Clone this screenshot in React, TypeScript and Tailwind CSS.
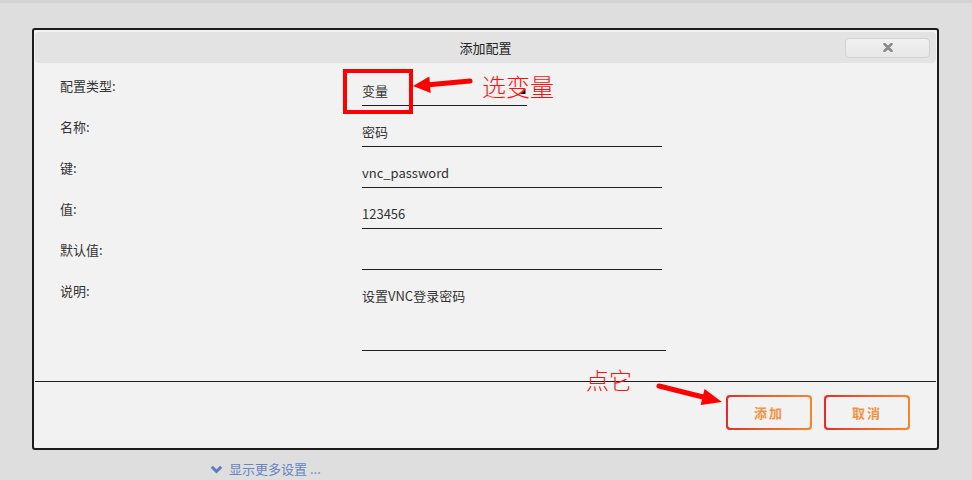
import React from "react";

const rows: { label: string; value: string; width: string; tall?: boolean; select?: boolean }[] = [
  { label: "配置类型:", value: "变量", width: "w-[165px]", select: true },
  { label: "名称:", value: "密码", width: "w-[300px]" },
  { label: "键:", value: "vnc_password", width: "w-[300px]" },
  { label: "值:", value: "123456", width: "w-[300px]" },
  { label: "默认值:", value: "", width: "w-[300px]" },
  { label: "说明:", value: "设置VNC登录密码", width: "w-[304px]", tall: true },
];

function GradButton({ text }: { text: string }) {
  return (
    <div className="w-[86px] h-[35px] rounded-[4px] p-[2px] bg-linear-to-r from-[#e42a2a] to-[#f5862c]">
      <div className="w-full h-full rounded-[3px] bg-[#f2f2f2] flex items-center justify-center text-[13px] font-bold tracking-[2px] text-[#f4913f]">
        {text}
      </div>
    </div>
  );
}

export default function App() {
  return (
    <div className="relative w-[972px] h-[480px] overflow-hidden bg-[#dedede] font-['Noto_Sans_CJK_SC','Noto_Sans',sans-serif] text-[#333]">
      <div className="h-[3px] bg-[#d3d3d3]" />
      <div className="ml-[32px] mt-[25px] w-[907px] h-[422px] border-2 border-[#1c1c1c] rounded-[3px] bg-[#f2f2f2] pt-[2px] px-[1px] flex flex-col">
        {/* header */}
        <div className="h-[31px] rounded-[4px] bg-[#e3e3e3] grid grid-cols-[1fr_auto_1fr] items-center">
          <div />
          <div className="text-[13px] leading-[20px] text-[#222]">添加配置</div>
          <div className="justify-self-end mr-[6px] w-[85px] h-[20px] rounded-[4px] border border-[#d2d2d2] bg-linear-to-b from-[#f1f1f1] to-[#e7e7e7] flex items-center justify-center">
            <svg width="10" height="9" viewBox="0 0 10 9">
              <path d="M1.5 1 L8.5 8 M8.5 1 L1.5 8" stroke="#8c8c8c" strokeWidth="2.6" strokeLinecap="round" />
            </svg>
          </div>
        </div>

        {/* form */}
        <div className="pt-[14px] pl-[25px] flex flex-col">
          {rows.map((r, i) => (
            <div key={i} className={`flex ${i < rows.length - 1 ? "mb-[12px]" : ""}`}>
              <div className="w-[302px] -mt-[1px] text-[13px] leading-[20px] text-[#333]">{r.label}</div>
              <div
                className={`${r.width} ${r.tall ? "h-[69px]" : "h-[29px]"} border-b border-[#1e1e1e] pt-[4px] text-[13px] leading-[20px] text-[#333] flex justify-between`}
              >
                <span>{r.value}</span>
                {r.select && (
                  <svg width="7" height="7" viewBox="0 0 7 7" className="mt-[7px] mr-[1px]">
                    <path d="M6.5 0.5 L6.5 6 L1 6 Z" fill="#111" />
                  </svg>
                )}
              </div>
            </div>
          ))}
        </div>

        <div className="mt-[30px] h-px bg-[#1e1e1e]" />

        <div className="pt-[13px] pr-[26px] flex justify-end gap-[12px]">
          <GradButton text="添加" />
          <GradButton text="取消" />
        </div>
      </div>

      <div className="mt-[9px] ml-[210px] flex items-center gap-[6px] text-[13px] leading-[20px] text-[#6784c3]">
        <svg width="13" height="9" viewBox="0 0 13 9">
          <path d="M1.8 1.8 L6.5 6.5 L11.2 1.8" stroke="#5b7cc0" strokeWidth="3" fill="none" strokeLinejoin="miter" />
        </svg>
        <span>显示更多设置 ...</span>
      </div>

      {/* annotations */}
      <div className="absolute left-[343px] top-[69px] w-[70px] h-[45px] border-[4px] border-[#ff0000]" />
      <div className="absolute left-[482px] top-[73px] text-[24px] leading-[26px] font-light text-[#ff1010]">选变量</div>
      <div className="absolute left-[586px] top-[366px] text-[23px] leading-[26px] font-light text-[#ff1010]">点它</div>
      <svg className="absolute left-0 top-0 pointer-events-none" width="972" height="480" viewBox="0 0 972 480">
        <line x1="470" y1="81" x2="426" y2="85" stroke="#ff0000" strokeWidth="5" strokeLinecap="round" />
        <polygon points="413,86 429.3,76.5 430.7,93" fill="#ff0000" />
        <line x1="659" y1="386" x2="705" y2="397.5" stroke="#ff0000" strokeWidth="5" strokeLinecap="round" />
        <polygon points="722,402 704.5,389 700.7,405" fill="#ff0000" />
      </svg>
    </div>
  );
}
